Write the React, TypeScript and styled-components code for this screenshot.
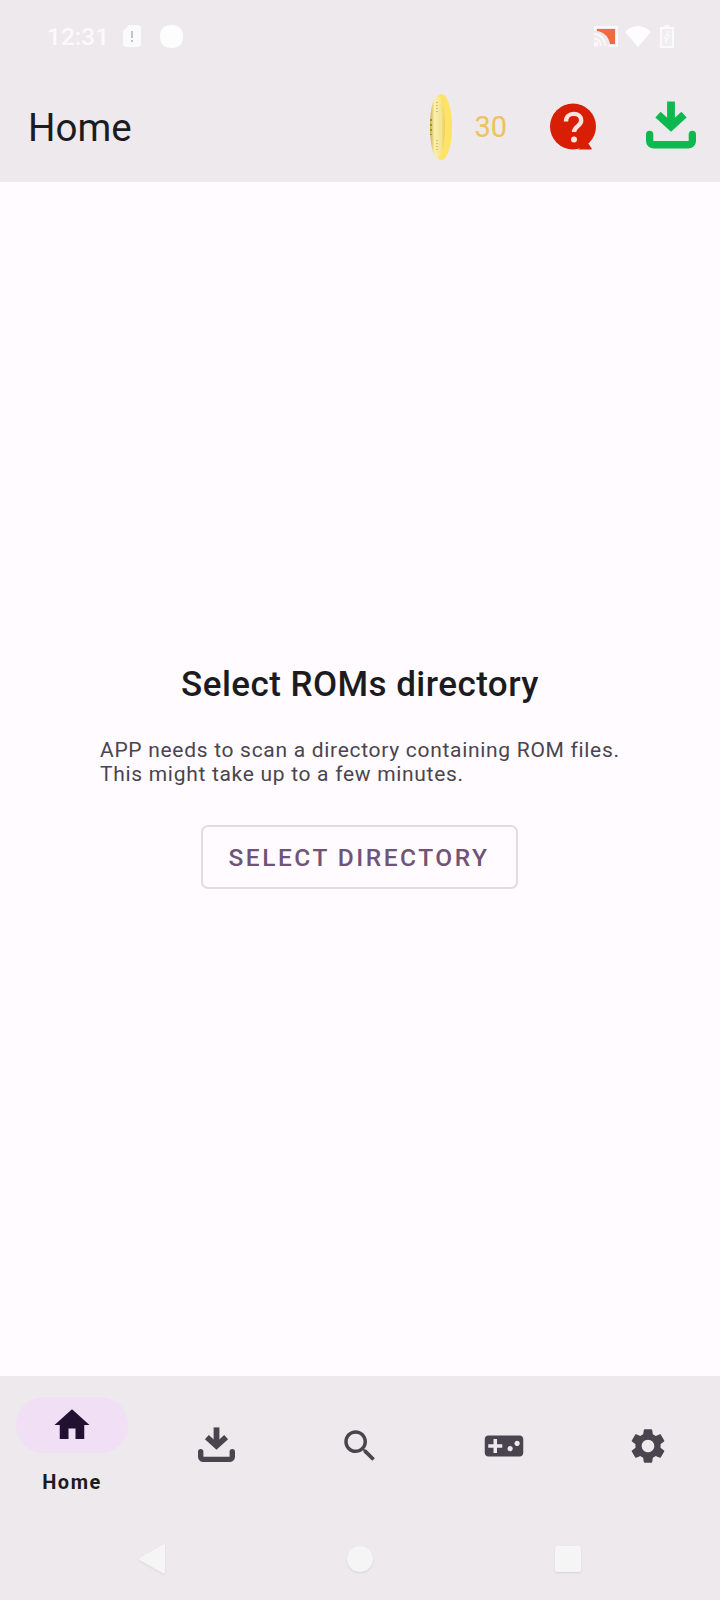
import React from 'react';
import styled, {createGlobalStyle} from 'styled-components';

const GlobalStyle = createGlobalStyle`
  html, body {
    margin: 0;
    padding: 0;
    background: #fffbfe;
    font-family: Roboto, "Liberation Sans", sans-serif;
  }
`;

const Page = styled.div`
  display: flex;
  flex-direction: column;
  width: 720px;
  height: 1600px;
  overflow: hidden;
  background: #fffbfe;
`;

const Header = styled.header`
  flex: none;
  height: 182px;
  display: flex;
  flex-direction: column;
  background: #ede9ec;
`;

const StatusBar = styled.div`
  height: 72px;
  display: flex;
  align-items: center;
  padding: 0 46px 0 47px;
`;

const Clock = styled.span`
  width: 76px;
  color: #fbfafb;
  font-size: 24.5px;
  font-weight: 500;
  line-height: 29px;
`;

const StatusIcon = styled.svg<{$gap?: number}>`
  display: block;
  flex: none;
  margin-right: ${props => props.$gap ?? 0}px;
`;

const Spacer = styled.div`
  flex: 1;
`;

const Toolbar = styled.div`
  flex: 1;
  display: flex;
  align-items: center;
  padding: 0 24px 0 28px;
`;

const Title = styled.h1`
  flex: 1;
  margin: 2px 0 0;
  color: #1c1b1f;
  font-size: 38.5px;
  font-weight: 400;
  line-height: 48px;
`;

const CoinCount = styled.span`
  color: #efc25a;
  font-size: 29px;
  line-height: 36px;
  margin: 0 43px 0 22px;
`;

const Main = styled.main`
  flex: 1;
  display: flex;
  flex-direction: column;
  align-items: center;
  padding-top: 482px;
`;

const Heading = styled.h2`
  margin: 0 0 32px;
  color: #1c1b1f;
  font-size: 35px;
  font-weight: 500;
  line-height: 42px;
  letter-spacing: 0.45px;
`;

const Description = styled.p`
  width: 520px;
  margin: 0 0 39px;
  color: #49454f;
  font-size: 21px;
  font-weight: 400;
  line-height: 24px;
  letter-spacing: 0.7px;
  white-space: nowrap;
`;

const OutlineButton = styled.button`
  width: 317px;
  height: 64px;
  margin-right: 2px;
  padding: 0;
  border: 2px solid #e0dde1;
  border-radius: 7px;
  background: transparent;
  color: #6f5478;
  font-family: inherit;
  font-size: 24.5px;
  font-weight: 500;
  letter-spacing: 2.5px;
`;

const BottomArea = styled.footer`
  flex: none;
  height: 224px;
  display: flex;
  flex-direction: column;
  background: #ede9ec;
`;

const Tabs = styled.nav`
  height: 147px;
  display: grid;
  grid-template-columns: repeat(5, 144px);
  padding-top: 21px;
  box-sizing: border-box;
`;

const Tab = styled.div`
  display: flex;
  flex-direction: column;
  align-items: center;
`;

const TabIndicator = styled.div<{$active?: boolean}>`
  width: 112px;
  height: 56px;
  margin-top: ${props => props.$active ? 0 : 21}px;
  display: flex;
  align-items: center;
  justify-content: center;
  border-radius: 28px;
  background: ${props => props.$active ? '#f1dff5' : 'transparent'};
  color: ${props => props.$active ? '#21102f' : '#49454f'};
`;

const TabLabel = styled.span`
  margin-top: 16px;
  color: #1c1b1f;
  font-size: 20px;
  font-weight: 700;
  line-height: 26px;
  letter-spacing: 1.5px;
`;

const TabDropIcon = styled.div`
  margin-top: 30px;
  color: #49454f;
`;

const SystemNav = styled.div`
  flex: 1;
  display: grid;
  grid-template-columns: repeat(3, 208px);
  justify-content: center;
  align-items: center;
  justify-items: center;
  padding-bottom: 6px;
`;

const BackKey = styled.svg`
  display: block;
  filter: drop-shadow(0 1px 1px rgba(0, 0, 0, 0.08));
`;

const HomeKey = styled.div`
  width: 26px;
  height: 26px;
  border-radius: 50%;
  background: #f5f5f6;
  box-shadow: 0 1px 2px rgba(0, 0, 0, 0.1);
`;

const RecentsKey = styled.div`
  width: 26px;
  height: 26px;
  border-radius: 2px;
  background: #f5f5f6;
  box-shadow: 0 1px 2px rgba(0, 0, 0, 0.1);
`;

const DownloadIcon = ({width, color, lift = 0}: {width: number; color: string; lift?: number}) => (
  <svg width={width} height={width * 46 / 48} viewBox="0 0 48 46" fill="none" stroke={color} style={{display: 'block', marginTop: -lift}}>
    <path d="M24 0.500v24" strokeWidth="7.500"/>
    <path d="M11.500 13l12.500 11.500L36.500 13" strokeWidth="7.500"/>
    <path d="M3.500 32v6.500a3.500 3.500 0 0 0 3.500 3.500h34a3.500 3.500 0 0 0 3.500-3.500V32" strokeWidth="7" strokeLinecap="round"/>
  </svg>
);

const NavIcon = ({d}: {d: string}) => (
  <svg width="42" height="42" viewBox="0 0 24 24" fill="currentColor" style={{display: 'block'}}>
    <path d={d}/>
  </svg>
);

const HOME_PATH = 'M10 20v-6h4v6h5v-8h3L12 3 2 12h3v8z';
const SEARCH_PATH = 'M15.5 14h-.79l-.28-.27C15.41 12.59 16 11.11 16 9.5 16 5.91 13.09 3 9.5 3S3 5.91 3 9.5 5.91 16 9.5 16c1.61 0 3.09-.59 4.23-1.57l.27.28v.79l5 4.99L20.49 19l-4.99-5zm-6 0C7.01 14 5 11.99 5 9.5S7.01 5 9.5 5 14 7.01 14 9.5 11.99 14 9.5 14z';
const GAMEPAD_PATH = 'M21 6H3c-1.1 0-2 .9-2 2v8c0 1.1.9 2 2 2h18c1.1 0 2-.9 2-2V8c0-1.1-.9-2-2-2zm-10 7H8v3H6v-3H3v-2h3V8h2v3h3v2zm4.5 2c-.83 0-1.5-.67-1.5-1.5s.67-1.5 1.5-1.5 1.5.67 1.5 1.5-.67 1.5-1.5 1.5zm4-3c-.83 0-1.5-.67-1.5-1.5S18.67 9 19.5 9s1.5.67 1.5 1.5-.67 1.5-1.5 1.5z';
const SETTINGS_PATH = 'M19.14 12.94c.04-.3.06-.61.06-.94 0-.32-.02-.64-.07-.94l2.03-1.58c.18-.14.23-.41.12-.61l-1.92-3.32c-.12-.22-.37-.29-.59-.22l-2.39.96c-.5-.38-1.03-.7-1.62-.94l-.36-2.54c-.04-.24-.24-.41-.48-.41h-3.84c-.24 0-.43.17-.47.41l-.36 2.54c-.59.24-1.13.57-1.62.94l-2.39-.96c-.22-.08-.47 0-.59.22L2.74 8.87c-.12.21-.08.47.12.61l2.03 1.58c-.05.3-.09.63-.09.94s.02.64.07.94l-2.03 1.58c-.18.14-.23.41-.12.61l1.92 3.32c.12.22.37.29.59.22l2.39-.96c.5.38 1.03.7 1.62.94l.36 2.54c.05.24.24.41.48.41h3.84c.24 0 .44-.17.47-.41l.36-2.54c.59-.24 1.13-.56 1.62-.94l2.39.96c.22.08.47 0 .59-.22l1.92-3.32c.12-.22.07-.47-.12-.61l-2.01-1.58zM12 15.6c-1.98 0-3.6-1.62-3.6-3.6s1.62-3.6 3.6-3.6 3.6 1.62 3.6 3.6-1.62 3.6-3.6 3.6z';

const CoinIcon = () => (
  <svg width="22" height="66" viewBox="0 0 22 66" style={{display: 'block', flex: 'none', marginTop: -1}}>
    <defs>
      <linearGradient id="coinFace" x1="0" y1="0" x2="1" y2="0">
        <stop offset="0" stopColor="#d2ae38"/>
        <stop offset="0.3" stopColor="#f8eeb0"/>
        <stop offset="0.75" stopColor="#f6e58e"/>
        <stop offset="1" stopColor="#e6cc5c"/>
      </linearGradient>
    </defs>
    <ellipse cx="11.500" cy="33" rx="10.500" ry="33" fill="#ffe266"/>
    <ellipse cx="7.500" cy="33" rx="7.500" ry="31" fill="url(#coinFace)"/>
    <path d="M1 25v16" stroke="#6a5718" strokeWidth="1" strokeDasharray="2 3"/>
    <path d="M7 8v12M7 46v12" stroke="#b3962f" strokeWidth="1" strokeDasharray="1 2"/>
  </svg>
);

const HelpIcon = () => (
  <svg width="47" height="48" viewBox="0 0 47 48" style={{display: 'block', flex: 'none', marginRight: 49}}>
    <circle cx="23" cy="23.500" r="23" fill="#d81e05"/>
    <path d="M28 46.500h13c.9 0 1.100-.7.500-1.200L38 40z" fill="#d81e05"/>
    <path d="M16 18.500c0-4.800 3.300-7.600 7.700-7.600 4.500 0 7.500 2.700 7.500 6.500 0 5.600-6.900 5.700-7.200 11.600" fill="none" stroke="#fbe3df" strokeWidth="4.400"/>
    <circle cx="24" cy="36.500" r="3" fill="#fbe3df"/>
  </svg>
);

const App = () => (
  <Page>
    <GlobalStyle/>
    <Header>
      <StatusBar>
        <Clock>12:31</Clock>
        <StatusIcon $gap={19} width="18" height="22" viewBox="0 0 18 22">
          <path d="M6 0h9a3 3 0 0 1 3 3v16a3 3 0 0 1-3 3H3a3 3 0 0 1-3-3V6z" fill="#fbfafb"/>
          <path d="M8 6h2v7H8zM8 15h2v2H8z" fill="#c4c2c4"/>
        </StatusIcon>
        <StatusIcon width="23" height="23" viewBox="0 0 23 23">
          <path d="M11.500 0C19 0 23 4 23 11.500S19 23 11.500 23 0 19 0 11.500 4 0 11.500 0z" fill="#fefdfe"/>
        </StatusIcon>
        <Spacer/>
        <StatusIcon $gap={7} width="24" height="21" viewBox="0 0 24 21">
          <path d="M1 5V1h22v19h-9" fill="none" stroke="#faf9fa" strokeWidth="2"/>
          <path d="M3 3h18v15h-5C15 11 10 6 3 5z" fill="#f4693c"/>
          <path d="M0 8c6 0 11 5 11 12M0 12.500c4 0 7 3 7 7.500" fill="none" stroke="#faf9fa" strokeWidth="2"/>
          <circle cx="2" cy="18" r="2.500" fill="#faf9fa"/>
        </StatusIcon>
        <StatusIcon $gap={9} width="26" height="21" viewBox="0 0 26 21">
          <path d="M13 21L0 6C3.500 2.500 8 0 13 0s9.500 2.500 13 6z" fill="#fefdfe"/>
        </StatusIcon>
        <StatusIcon width="14" height="23" viewBox="0 0 14 23">
          <path d="M4.500 0h5v2H13a1 1 0 0 1 1 1v19a1 1 0 0 1-1 1H1a1 1 0 0 1-1-1V3a1 1 0 0 1 1-1h3.500z" fill="#fbfafb"/>
          <path d="M2 4h10v17H2z" fill="#f1eef1"/>
          <path d="M8.500 6l-4 7.500H7l-1.500 4.500 4-7.500H7z" fill="none" stroke="#fbfafb" strokeWidth="1.200"/>
        </StatusIcon>
      </StatusBar>
      <Toolbar>
        <Title>Home</Title>
        <CoinIcon/>
        <CoinCount>30</CoinCount>
        <HelpIcon/>
        <DownloadIcon width={50} color="#0db84e" lift={4}/>
      </Toolbar>
    </Header>
    <Main>
      <Heading>Select ROMs directory</Heading>
      <Description>APP needs to scan a directory containing ROM files.<br/>This might take up to a few minutes.</Description>
      <OutlineButton>SELECT DIRECTORY</OutlineButton>
    </Main>
    <BottomArea>
      <Tabs>
        <Tab>
          <TabIndicator $active><NavIcon d={HOME_PATH}/></TabIndicator>
          <TabLabel>Home</TabLabel>
        </Tab>
        <Tab><TabDropIcon><DownloadIcon width={37} color="#49454f"/></TabDropIcon></Tab>
        <Tab><TabIndicator><NavIcon d={SEARCH_PATH}/></TabIndicator></Tab>
        <Tab><TabIndicator><NavIcon d={GAMEPAD_PATH}/></TabIndicator></Tab>
        <Tab><TabIndicator><NavIcon d={SETTINGS_PATH}/></TabIndicator></Tab>
      </Tabs>
      <SystemNav>
        <BackKey width="26" height="30" viewBox="0 0 26 30">
          <path d="M25 .500c.6 0 1 .4 1 1v27c0 1-.8 1.400-1.600 1L.6 16c-.8-.5-.8-1.500 0-2L24 .6z" fill="#f5f5f6"/>
        </BackKey>
        <HomeKey/>
        <RecentsKey/>
      </SystemNav>
    </BottomArea>
  </Page>
);

export default App;
